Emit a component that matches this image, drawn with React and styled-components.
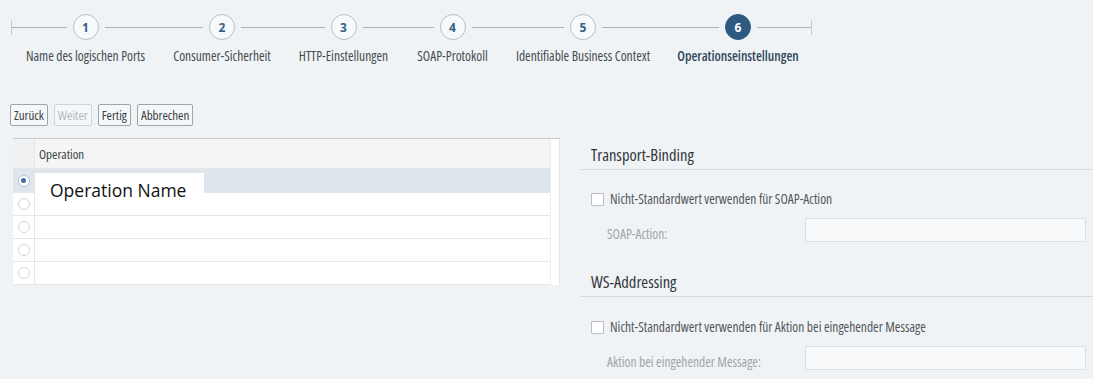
import React from 'react';
import styled, { createGlobalStyle } from 'styled-components';

const GlobalStyle = createGlobalStyle`
  html, body {
    margin: 0;
    padding: 0;
    background: #eff3f6;
  }
  body {
    font-family: "Open Sans", "Noto Sans", sans-serif;
    font-stretch: 75%;
    font-weight: 400;
    color: #32363a;
  }
`;

const Page = styled.div`
  width: 1093px;
  height: 379px;
  overflow: hidden;
  background: #eff3f6;
`;

const Stepper = styled.div`
  padding: 14px 0 0 11px;
`;

const Track = styled.div`
  position: relative;
  display: inline-flex;

  &:before {
    content: '';
    position: absolute;
    left: 0;
    right: 0;
    top: 13px;
    height: 1px;
    background: #a9b2bb;
  }

  &:after {
    content: '';
    position: absolute;
    left: 0;
    right: 0;
    top: 6px;
    height: 15px;
    border-left: 1px solid #c3c9cf;
    border-right: 1px solid #c3c9cf;
  }
`;

const Step = styled.div`
  width: ${({ $w }) => $w}px;
  display: flex;
  flex-direction: column;
  align-items: center;
`;

const Circle = styled.div`
  position: relative;
  z-index: 1;
  box-sizing: border-box;
  width: 26px;
  height: 26px;
  border-radius: 50%;
  border: 1px solid ${({ $active }) => ($active ? '#2c5a80' : '#b8c0c8')};
  background: ${({ $active }) => ($active ? '#2c5a80' : '#f7f9fa')};
  box-shadow: 0 0 0 6px #eff3f6;
  color: ${({ $active }) => ($active ? '#ffffff' : '#346187')};
  font-size: 12px;
  font-weight: 700;
  font-stretch: 100%;
  display: flex;
  align-items: center;
  justify-content: center;
`;

const StepLabel = styled.div`
  margin-top: 8px;
  font-size: 13.5px;
  line-height: 16px;
  white-space: nowrap;
  color: ${({ $active }) => ($active ? '#32475c' : '#464b50')};
  font-weight: ${({ $active }) => ($active ? 600 : 400)};
`;

const Toolbar = styled.div`
  display: flex;
  gap: 6px;
  padding-left: 10px;
  margin-top: 40px;
`;

const Button = styled.button`
  box-sizing: border-box;
  height: 22px;
  padding: 0 3px;
  font-family: inherit;
  font-stretch: 75%;
  font-weight: 400;
  font-size: 13px;
  border-radius: 2px;
  background: #f5f7f9;
  border: 1px solid ${({ disabled }) => (disabled ? '#cfd4d9' : '#9ea4aa')};
  color: ${({ disabled }) => (disabled ? '#b3b8bd' : '#3a3e42')};
`;

const Content = styled.div`
  display: flex;
  margin-top: 12px;
`;

const Table = styled.div`
  position: relative;
  margin-left: 13px;
  width: 547px;
  display: flex;
  border-top: 1px solid #c8ccd0;
  align-self: flex-start;
`;

const Grid = styled.div`
  flex: 1;
  background: #ffffff;
`;

const Scrollbar = styled.div`
  width: 8px;
  background: #ffffff;
  border-left: 1px solid #eceff1;
  border-right: 1px solid #e3e6e9;
`;

const Row = styled.div`
  box-sizing: border-box;
  display: grid;
  grid-template-columns: 22px 1fr;
  height: ${({ $h }) => $h}px;
  border-bottom: 1px solid #e5e7e9;
  background: ${({ $selected, $header }) =>
    $header ? '#f5f5f5' : $selected ? '#dee5ed' : '#ffffff'};
`;

const SelectCell = styled.div`
  border-right: 1px solid #e5e7e9;
  background: ${({ $header }) => ($header ? '#f0f1f2' : 'transparent')};
  display: flex;
  align-items: center;
  justify-content: center;
`;

const HeaderText = styled.div`
  padding-left: 4px;
  display: flex;
  align-items: center;
  font-size: 13px;
  color: #3a3e42;
`;

const Radio = styled.span`
  box-sizing: border-box;
  width: 12px;
  height: 12px;
  border-radius: 50%;
  border: 1px solid ${({ $checked }) => ($checked ? '#b4c2d2' : '#d3d6d9')};
  background: #ffffff;
  display: flex;
  align-items: center;
  justify-content: center;

  &:after {
    content: '';
    width: 5px;
    height: 5px;
    border-radius: 50%;
    background: ${({ $checked }) => ($checked ? '#3f6fa3' : 'transparent')};
  }
`;

const NameOverlay = styled.div`
  position: absolute;
  left: 22px;
  top: 34px;
  width: 169px;
  height: 36px;
  background: #ffffff;
  box-sizing: border-box;
  padding: 5px 0 0 15px;
  font-stretch: 100%;
  font-weight: 400;
  font-size: 17.5px;
  color: #111111;
`;

const Panel = styled.div`
  flex: 1;
  margin-left: 20px;
`;

const SectionTitle = styled.div`
  padding: 7px 0 5px 11px;
  margin-top: ${({ $mt }) => $mt}px;
  font-size: 16.5px;
  line-height: 19px;
  color: #32363a;
  border-bottom: 1px solid #d5d9dd;
`;

const CheckRow = styled.label`
  display: flex;
  align-items: center;
  height: 16px;
  margin-top: ${({ $mt }) => $mt}px;
  padding-left: 11px;
  font-size: 13.5px;
  color: #53575b;
`;

const Checkbox = styled.span`
  box-sizing: border-box;
  width: 13px;
  height: 13px;
  border: 1px solid #b9bec3;
  background: #ffffff;
  border-radius: 1px;
  margin-right: 6px;
`;

const FieldRow = styled.div`
  display: flex;
  align-items: center;
  margin-top: 10px;
  padding-left: 27px;
  padding-right: 7px;
`;

const FieldLabel = styled.div`
  width: 198px;
  font-size: 13.5px;
  color: #a0a5aa;
  padding-top: 8px;
`;

const Input = styled.div`
  flex: 1;
  height: 24px;
  box-sizing: border-box;
  border: 1px solid #dcdfe2;
  background: #f8f9fa;
`;

const steps = [
  { n: 1, label: 'Name des logischen Ports', w: 149 },
  { n: 2, label: 'Consumer-Sicherheit', w: 124 },
  { n: 3, label: 'HTTP-Einstellungen', w: 119 },
  { n: 4, label: 'SOAP-Protokoll', w: 99 },
  { n: 5, label: 'Identifiable Business Context', w: 162 },
  { n: 6, label: 'Operationseinstellungen', w: 148, active: true },
];

const rows = [
  { h: 24, selected: true },
  { h: 23 },
  { h: 23 },
  { h: 23 },
  { h: 23 },
];

const App = () => {
  return (
    <Page>
      <GlobalStyle />
      <Stepper>
        <Track>
          {steps.map((s) => (
            <Step key={s.n} $w={s.w}>
              <Circle $active={s.active}>{s.n}</Circle>
              <StepLabel $active={s.active}>{s.label}</StepLabel>
            </Step>
          ))}
        </Track>
      </Stepper>

      <Toolbar>
        <Button>Zurück</Button>
        <Button disabled>Weiter</Button>
        <Button>Fertig</Button>
        <Button>Abbrechen</Button>
      </Toolbar>

      <Content>
        <Table>
          <Grid>
            <Row $header $h={30}>
              <SelectCell $header />
              <HeaderText>Operation</HeaderText>
            </Row>
            {rows.map((r, i) => (
              <Row key={i} $h={r.h} $selected={r.selected}>
                <SelectCell>
                  <Radio $checked={r.selected} />
                </SelectCell>
                <div />
              </Row>
            ))}
          </Grid>
          <Scrollbar />
          <NameOverlay>Operation Name</NameOverlay>
        </Table>

        <Panel>
          <SectionTitle $mt={0}>Transport-Binding</SectionTitle>
          <CheckRow $mt={21}>
            <Checkbox />
            Nicht-Standardwert verwenden für SOAP-Action
          </CheckRow>
          <FieldRow>
            <FieldLabel>SOAP-Action:</FieldLabel>
            <Input />
          </FieldRow>

          <SectionTitle $mt={22}>WS-Addressing</SectionTitle>
          <CheckRow $mt={22}>
            <Checkbox />
            Nicht-Standardwert verwenden für Aktion bei eingehender Message
          </CheckRow>
          <FieldRow>
            <FieldLabel>Aktion bei eingehender Message:</FieldLabel>
            <Input />
          </FieldRow>
        </Panel>
      </Content>
    </Page>
  );
};

export default App;
